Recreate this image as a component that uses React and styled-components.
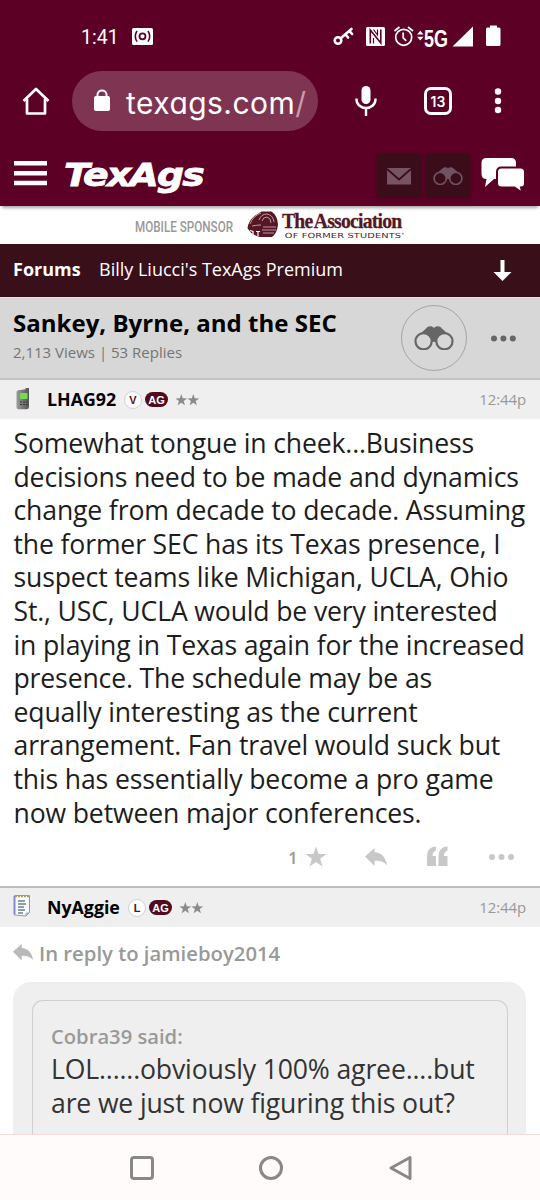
import React from 'react'
import styled, { createGlobalStyle } from 'styled-components'

const GlobalStyle = createGlobalStyle`
  * { box-sizing: border-box; }
  body {
    margin: 0;
    background: #fff;
    font-family: 'Open Sans', sans-serif;
    overflow: hidden;
  }
`
const maroon = '#5c0025'
const dark = '#390f19'

const Page = styled.div`
  width: 540px;
  height: 1200px;
  display: flex;
  flex-direction: column;
  overflow: hidden;
  background: #fff;
`
const StatusBar = styled.div`
  flex: none;
  display: flex;
  align-items: center;
  height: 71px;
  padding: 1px 0 0 81px;
  background: ${maroon};
  color: #fff;
`
const Clock = styled.span`
  width: 45px;
  font: 400 19.5px Roboto, sans-serif;
  padding-top: 3px;
`
const Network = styled.span`
  width: 25px;
  font: 700 23px 'Liberation Sans', sans-serif;
  padding-top: 6px;
  white-space: nowrap;
  transform: scaleX(0.78);
  transform-origin: 0 50%;
`
const BrowserBar = styled.div`
  flex: none;
  display: flex;
  height: 75px;
  padding-bottom: 15px;
  align-items: center;
  background: ${maroon};
  color: #fff;
`
const Icon = styled.svg`
  flex: none;
  display: block;
  margin-left: ${p => p.$gap || 0}px;
`
// viewBox is given in screen units so neighbouring icons share one grid
const Glyph = ({ x, y, w, h, gap, children }) =>
  <Icon $gap={gap} width={w} height={h} viewBox={`${x} ${y} ${w} ${h}`} fill="none">
    {children}
  </Icon>

const UrlPill = styled.div`
  display: flex;
  align-items: center;
  width: 246px;
  height: 60px;
  margin-left: 22px;
  border-radius: 30px;
  background: #7f3452;
`
const Url = styled.span`
  margin-left: 15px;
  font-family: Inter, sans-serif;
  font-size: 30px;
  font-feature-settings: 'cv11', 'ss03';
  letter-spacing: 0.45px;
  white-space: nowrap;
  padding-top: 4px;
`
const Slash = styled.span`color: #c99bad;`

const SiteHeader = styled.header`
  flex: none;
  position: relative;
  z-index: 1;
  display: flex;
  align-items: center;
  height: 60px;
  background: ${maroon};
  box-shadow: 0 4px 3px -2px rgba(0, 0, 0, 0.35);
`
const Logo = styled.span`
  width: 141px;
  margin-left: 17px;
  padding-bottom: 3px;
  color: #fff;
  font: italic 700 32px/36px 'DejaVu Sans', sans-serif;
  letter-spacing: -1.5px;
  white-space: nowrap;
  transform: scaleX(1.18);
  transform-origin: 0 50%;
  -webkit-text-stroke: 0.8px #fff;
`
const Tile = styled.div`
  display: flex;
  align-items: center;
  justify-content: center;
  width: 44px;
  height: 44px;
  margin-left: ${p => p.$gap}px;
  background: #3b0d1b;
  box-shadow: 0 0 3px #3b0d1b;
`
const Sponsor = styled.div`
  flex: none;
  display: flex;
  align-items: center;
  height: 38px;
  padding-left: 135px;
  background: #fff;
`
const SponsorLabel = styled.span`
  width: 112px;
  font: 500 14.5px Roboto, sans-serif;
  color: #999;
  white-space: nowrap;
  transform: scaleX(0.805);
  transform-origin: 0 50%;
  padding-top: 4px;
`
const Association = styled.div`
  margin-left: 4px;
  color: #541723;
  display: flex;
  flex-direction: column;
  padding-top: 2px;
`
const AssocName = styled.span`
  height: 19px;
  font: 700 21px/18px 'Liberation Serif', serif;
  letter-spacing: -0.8px;
  word-spacing: -2px;
  white-space: nowrap;
  transform: scaleX(0.935);
  transform-origin: 0 50%;
  -webkit-text-stroke: 0.3px #541723;
`
const AssocSub = styled.span`
  font: 400 7px/9px 'DejaVu Sans', sans-serif;
  letter-spacing: 0.1px;
  white-space: nowrap;
  padding: 1px 0 0 2px;
  transform: scaleX(1.4);
  transform-origin: 0 50%;
`
const Crumbs = styled.nav`
  flex: none;
  display: flex;
  align-items: center;
  height: 53px;
  padding: 0 28px 4px 13px;
  background: ${dark};
  color: #fff;
  font-size: 18px;
  white-space: nowrap;
`
const CrumbRoot = styled.b`width: 86px;`
const Grow = styled.div`flex: 1;`

const TopicBar = styled.div`
  flex: none;
  display: flex;
  align-items: center;
  height: 83px;
  padding-left: 13px;
  background: #d7d7d7;
  border-top: 1px solid #e4e0e1;
  border-bottom: 2px solid #c3c3c3;
`
const TopicText = styled.div`
  width: 388px;
  padding-bottom: 7px;
  white-space: nowrap;
`
const Title = styled.h1`
  margin: 0;
  font-size: 24px;
  line-height: 34px;
  letter-spacing: 0.02px;
  color: #000;
`
const Stats = styled.div`
  font-size: 15px;
  line-height: 24px;
  color: #747474;
`
const WatchButton = styled.div`
  display: flex;
  align-items: center;
  justify-content: center;
  width: 66px;
  height: 66px;
  border: 1px solid #a5a5a5;
  border-radius: 50%;
`
const Poster = styled.div`
  flex: none;
  display: flex;
  align-items: center;
  height: 39px;
  padding: 0 14px 0 13px;
  background: #efefef;
`
const Name = styled.b`
  margin: 0 0 2px 14px;
  width: ${p => p.$width}px;
  font-size: 17.8px;
  color: #000;
`
const Letter = styled.span`
  display: flex;
  align-items: center;
  justify-content: center;
  width: 18px;
  height: 18px;
  border: 1px solid #d0d0d0;
  border-radius: 50%;
  background: #fff;
  color: #5c0e22;
  font: 700 11px 'Liberation Sans', sans-serif;
`
const Ag = styled(Letter)`
  width: 23px;
  height: 15px;
  margin: 0 7px 0 3px;
  border: 0;
  border-radius: 8px;
  background: #500b1e;
  color: #fff;
`
const Time = styled.span`
  padding-bottom: 1px;
  font-size: 15px;
  letter-spacing: -0.1px;
  color: #999;
`
const Body = styled.p`
  flex: none;
  margin: 0;
  height: 404px;
  margin-top: 8px;
  padding-left: 13.5px;
  font-size: 26.6px;
  line-height: 33.6px;
  letter-spacing: -0.15px;
  color: #1d1d1d;
  white-space: pre;
`
const Actions = styled.div`
  flex: none;
  display: flex;
  align-items: center;
  height: 57px;
  padding: 0 0 3px 288px;
  border-bottom: 2px solid #bdbdbd;
`
const Likes = styled.span`
  width: 16px;
  font-size: 17px;
  font-weight: 600;
  color: #999;
`
const ReplyTo = styled.div`
  flex: none;
  display: flex;
  align-items: center;
  height: 54px;
  padding: 0 0 3px 13px;
  color: #999;
  font-size: 20.3px;
  font-weight: 600;
`
const ReplyName = styled.span`margin-left: 6px;`

const Quote = styled.div`
  flex: 1;
  margin: 1px 14px 0 13px;
  padding: 18px 18px 0 19px;
  border-radius: 18px 18px 0 0;
  background: #efefef;
  display: flex;
`
const QuoteInner = styled.blockquote`
  flex: 1;
  margin: 0;
  padding: 19px 0 0 18px;
  border: 1px solid #cfcfcf;
  border-bottom: 0;
  border-radius: 11px 11px 0 0;
  white-space: pre;
`
const Said = styled.div`
  font-size: 20.2px;
  font-weight: 600;
  line-height: 33px;
  color: #999;
`
const QuoteText = styled.div`
  font-size: 26.6px;
  line-height: 33.6px;
  letter-spacing: -0.15px;
  color: #333;
`
const NavBar = styled.div`
  flex: none;
  display: flex;
  height: 66px;
  align-items: center;
  border-top: 1px solid #f6dcd8;
  background: #fffbfa;
`
const TabCount = styled.div`
  display: flex;
  align-items: center;
  justify-content: center;
  width: 28px;
  height: 28px;
  margin-left: 46px;
  border: 3px solid #fff;
  border-radius: 7px;
  font: 600 14px Inter, sans-serif;
`
const Gap = styled.div`width: 37px;`

const Binoculars = ({ width, color, hole }) =>
  <svg width={width} height={width * 0.62} viewBox="0 0 40 25" fill="none">
    <path d="M1.500 12 12 2.500C14-.5 18-.5 20 2 22-.5 26-.5 28 2.500L38.500 12 31 21 23 17q-3-2-6 0L9 21Z" fill={color} />
    <circle cx="9.5" cy="15.3" r="8.2" fill={hole} stroke={color} strokeWidth="2.200" />
    <circle cx="30.5" cy="15.3" r="8.2" fill={hole} stroke={color} strokeWidth="2.200" />
  </svg>

const star = (cx, cy, r) =>
  Array.from({ length: 10 }, (_, i) => {
    const a = Math.PI * (i / 5 - 0.5)
    const d = i % 2 ? r * 0.4 : r
    return `${cx + d * Math.cos(a)},${cy + d * Math.sin(a)}`
  }).join(' ')

const Reply = ({ width, color }) =>
  <svg width={width} height={width * 0.82} viewBox="0 0 22 18" fill={color}>
    <path d="M0 8.6 9.6 0v4.3C16 4.6 21 9 22 17.6c-3-4-7-5-12.4-4.8V18Z" />
  </svg>

const Phone = () =>
  <Glyph x={13} y={387} w={20} h={24}>
    <defs>
      <linearGradient id="phone">
        <stop stopColor="#9b9b9b" />
        <stop offset="1" stopColor="#555" />
      </linearGradient>
    </defs>
    <path d="M16.5 391q0-1.500 2-1.800l7-.9v-1.500h2.500q1 0 1 1v18q0 2-2 2.500h-8.500q-2 0-2-2z" fill="url(#phone)" />
    <rect x="20" y="392" width="7.500" height="6" rx="1" fill="#72de4e" />
    <path d="M20 401h2m1 0h2m1 0h1.500M20 403.500h2m1 0h2m1 0h1.500" stroke="#333" />
  </Glyph>

const Notepad = () =>
  <Glyph x={13} y={895} w={20} h={26}>
    <path d="M14.500 895.500h15v17l-3.500 3.500-11.500-1z" fill="#f9fcff" stroke="#8b98a8" />
    <path d="M14.500 896v18.500" stroke="#8887cf" strokeWidth="2" />
    <path d="M15 896h15" stroke="#b39a57" strokeWidth="2.500" strokeDasharray="2 1" />
    <path d="M18 901h7m-7 3h8m-8 3h6m-6 3h7m-7 3h5" stroke="#678087" strokeWidth="1.300" />
    <path d="M29.500 912l-4 4v-3z" fill="#a8b0ba" />
  </Glyph>

const PosterRow = ({ icon, name, width, letter }) =>
  <Poster>
    {icon}
    <Name $width={width}>{name}</Name>
    <Letter>{letter}</Letter>
    <Ag>AG</Ag>
    <Glyph x={175} y={392} w={26} h={16}>
      <polygon points={star(181.3, 400.300, 6.200)} fill="#8b8b8b" />
      <polygon points={star(193.300, 400.300, 6.200)} fill="#8b8b8b" />
    </Glyph>
    <Grow />
    <Time>12:44p</Time>
  </Poster>

const post = `Somewhat tongue in cheek...Business
decisions need to be made and dynamics
change from decade to decade. Assuming
the former SEC has its Texas presence, I
suspect teams like Michigan, UCLA, Ohio
St., USC, UCLA would be very interested
in playing in Texas again for the increased
presence. The schedule may be as
equally interesting as the current
arrangement. Fan travel would suck but
this has essentially become a pro game
now between major conferences.`

const App = () =>
  <Page>
    <GlobalStyle />
    <StatusBar>
      <Clock>1:41</Clock>
      <Glyph x={132} y={24} w={22} h={24} gap={6}>
        <rect x="132" y="28" width="21" height="17" rx="1.500" fill="#fff" />
        <circle cx="142.500" cy="36.300" r="3" stroke={maroon} strokeWidth="1.800" />
        <path d="M137 31q-3.500 5.300 0 10.600M148 31q3.500 5.300 0 10.600" stroke={maroon} strokeWidth="1.600" />
      </Glyph>
      <Glyph x={333} y={24} w={21} h={24} gap={179}>
        <circle cx="338" cy="40.500" r="3.300" stroke="#fff" strokeWidth="2.600" />
        <path d="M341 38 351.500 29M345.500 34.500l2.600 3M349.500 31l2.600 3" stroke="#fff" strokeWidth="2.600" strokeLinecap="round" />
      </Glyph>
      <Glyph x={366} y={24} w={19} h={24} gap={12}>
        <rect x="366" y="27" width="19" height="19" rx="1.500" fill="#fff" />
        <path d="M370.300 43.500V30l10.500 13V29.500" stroke={maroon} strokeWidth="1.600" />
        <path d="M373.500 29.500l4 5.500v-5.500M373.500 43.500v-5.500" stroke={maroon} strokeWidth="1.200" />
      </Glyph>
      <Glyph x={393} y={24} w={22} h={24} gap={8}>
        <circle cx="403.700" cy="37.300" r="8" stroke="#fff" strokeWidth="1.700" />
        <path d="M403.200 32.500v5.300l3 3M394.500 31l5-4M413 31l-5-4" stroke="#fff" strokeWidth="1.700" />
      </Glyph>
      <Glyph x={416} y={24} w={8} h={24} gap={1}>
        <path d="M417 34.500h6.500l-3.200-3.800zM417 36.800h6.500l-3.200 3.800z" fill="#fff" />
      </Glyph>
      <Network>5G</Network>
      <Glyph x={452} y={24} w={22} h={24} gap={3}>
        <path d="M452.500 46.500 473 26.500v20z" fill="#fff" />
      </Glyph>
      <Glyph x={486} y={24} w={15} h={24} gap={12}>
        <path d="M487.500 27.500h2.500v-2h7v2h2q1.500 0 1.500 1.500v15.500q0 1.500-1.500 1.500h-11.500q-1.500 0-1.500-1.500v-15.500q0-1.500 1.500-1.500z" fill="#fff" />
      </Glyph>
    </StatusBar>

    <BrowserBar>
      <Glyph x={21} y={81} w={29} h={40} gap={21}>
        <path d="M23.500 101 36 89l12.500 12M27 99v14.500h18V99" stroke="#fff" strokeWidth="2.700" strokeLinejoin="round" />
      </Glyph>
      <UrlPill>
        <Glyph x={93} y={81} w={18} h={40} gap={21}>
          <rect x="94" y="96" width="16" height="15" rx="2" fill="#fff" />
          <path d="M97.500 97v-2.500a4.500 4 0 0 1 9 0V97" stroke="#fff" strokeWidth="2" />
        </Glyph>
        <Url>texags.com<Slash>/</Slash></Url>
      </UrlPill>
      <Glyph x={354} y={81} w={24} h={40} gap={36}>
        <rect x="361.500" y="86" width="9" height="18" rx="4.500" fill="#fff" />
        <path d="M356.500 98.500v1a9.500 8.500 0 0 0 19 0v-1M366 108v8" stroke="#fff" strokeWidth="2.400" />
      </Glyph>
      <TabCount>13</TabCount>
      <Glyph x={493} y={81} w={10} h={40} gap={41}>
        <circle cx="498" cy="91.500" r="3.200" fill="#fff" />
        <circle cx="498" cy="101" r="3.200" fill="#fff" />
        <circle cx="498" cy="110" r="3.200" fill="#fff" />
      </Glyph>
    </BrowserBar>

    <SiteHeader>
      <Glyph x={14} y={156} w={33} h={40} gap={14}>
        <path d="M14 163.200h33M14 173.200h33M14 183h33" stroke="#fff" strokeWidth="4.400" />
      </Glyph>
      <Logo>TexAgs</Logo>
      <Tile $gap={172}>
        <svg width="24" height="17" fill="none">
          <path d="M0 0h24v16.500H0z" fill="#785462" />
          <path d="M0 1l12 10.500L24 1" stroke="#3b0d1b" strokeWidth="1.800" />
        </svg>
      </Tile>
      <Tile $gap={5}><Binoculars width={30} color="#705360" hole="#3b0d1b" /></Tile>
      <Glyph x={480} y={156} w={46} h={40} gap={10}>
        <path d="M486 158h25q5 0 5 5v11q0 5-5 5h-17l-9 8 1.500-8q-5 0-5-5v-11q0-5 5-5z" fill="#fff" />
        <path d="M501.500 167.500h19q4.500 0 4.500 4.500v11q0 4.500-4 4.500l1.500 5.500-8-5.500h-13q-4.500 0-4.500-4.500v-11q0-4.500 4.500-4.500z" fill="#fff" stroke={maroon} strokeWidth="2" />
      </Glyph>
    </SiteHeader>

    <Sponsor>
      <SponsorLabel>MOBILE SPONSOR</SponsorLabel>
      <Glyph x={247} y={209} w={31} h={34}>
        <path d="M247.500 229q1-7 7-12l7-4.500h10q6 4 6.500 13-1 9-6 12.500h-12q-9-2-12.500-9z" fill="#541723" />
        <path d="M250 225q3-8 11-11M252 227q5-1 9-1M259 221q2-6 8-6 6 1 7 8M262 222q1-4 5-4 4 1 4 6M263 228h13M262 231h14M263 234h11" stroke="#c9a7ae" strokeWidth=".9" />
        <path d="M250 231.500l3 1v3.500M256 232.500h4m-2 0v4.500" stroke="#fff" strokeWidth="1.200" />
      </Glyph>
      <Association>
        <AssocName>The Association</AssocName>
        <AssocSub>OF FORMER STUDENTS’</AssocSub>
      </Association>
    </Sponsor>

    <Crumbs>
      <CrumbRoot>Forums</CrumbRoot>
      <span>Billy Liucci's TexAgs Premium</span>
      <Grow />
      <Glyph x={493} y={256} w={19} h={26}>
        <path d="M500.500 260h4v12h7l-9 9-9-9h7z" fill="#fff" />
      </Glyph>
    </Crumbs>

    <TopicBar>
      <TopicText>
        <Title>Sankey, Byrne, and the SEC</Title>
        <Stats>2,113 Views | 53 Replies</Stats>
      </TopicText>
      <WatchButton><Binoculars width={40} color="#666" hole="#d7d7d7" /></WatchButton>
      <Glyph x={490} y={328} w={27} h={21} gap={23}>
        <circle cx="494" cy="338.500" r="3" fill="#666" />
        <circle cx="503.400" cy="338.500" r="3" fill="#666" />
        <circle cx="512.800" cy="338.500" r="3" fill="#666" />
      </Glyph>
    </TopicBar>

    <PosterRow icon={<Phone />} name="LHAG92" width={77} letter="V" />
    <Body>{post}</Body>
    <Actions>
      <Likes>1</Likes>
      <Glyph x={304} y={844} w={24} h={26}>
        <polygon points={star(316, 857.500, 11)} fill="#c8c8c8" />
      </Glyph>
      <Gap />
      <Reply width={22} color="#c8c8c8" />
      <Glyph x={427} y={844} w={21} h={26} gap={40}>
        <path d="M427 866v-10q0-9 9-9.500v4q-3.500 1-3.500 5.500h3.500v10zM438.500 866v-10q0-9 9-9.500v4q-3.500 1-3.500 5.500h3.500v10z" fill="#c8c8c8" />
      </Glyph>
      <Glyph x={488} y={844} w={27} h={26} gap={40}>
        <circle cx="492" cy="857" r="3" fill="#c8c8c8" />
        <circle cx="501.500" cy="857" r="3" fill="#c8c8c8" />
        <circle cx="511" cy="857" r="3" fill="#c8c8c8" />
      </Glyph>
    </Actions>
    <PosterRow icon={<Notepad />} name="NyAggie" width={81} letter="L" />
    <ReplyTo>
      <Reply width={20} color="#b9b9b9" />
      <ReplyName>In reply to jamieboy2014</ReplyName>
    </ReplyTo>
    <Quote>
      <QuoteInner>
        <Said>Cobra39 said:</Said>
        <QuoteText>{'LOL......obviously 100% agree....but\nare we just now figuring this out?'}</QuoteText>
      </QuoteInner>
    </Quote>

    <NavBar>
      <Glyph x={129} y={1154} w={26} h={26} gap={129}>
        <rect x="131.500" y="1156.500" width="21" height="21" rx="2.500" stroke="#888" strokeWidth="3" />
      </Glyph>
      <Glyph x={258} y={1154} w={26} h={26} gap={103}>
        <circle cx="271" cy="1167" r="10.500" stroke="#888" strokeWidth="3" />
      </Glyph>
      <Glyph x={388} y={1154} w={26} h={26} gap={104}>
        <path d="M391 1167 410 1156.500v21z" stroke="#888" strokeWidth="3" strokeLinejoin="round" />
      </Glyph>
    </NavBar>
  </Page>

export default App
